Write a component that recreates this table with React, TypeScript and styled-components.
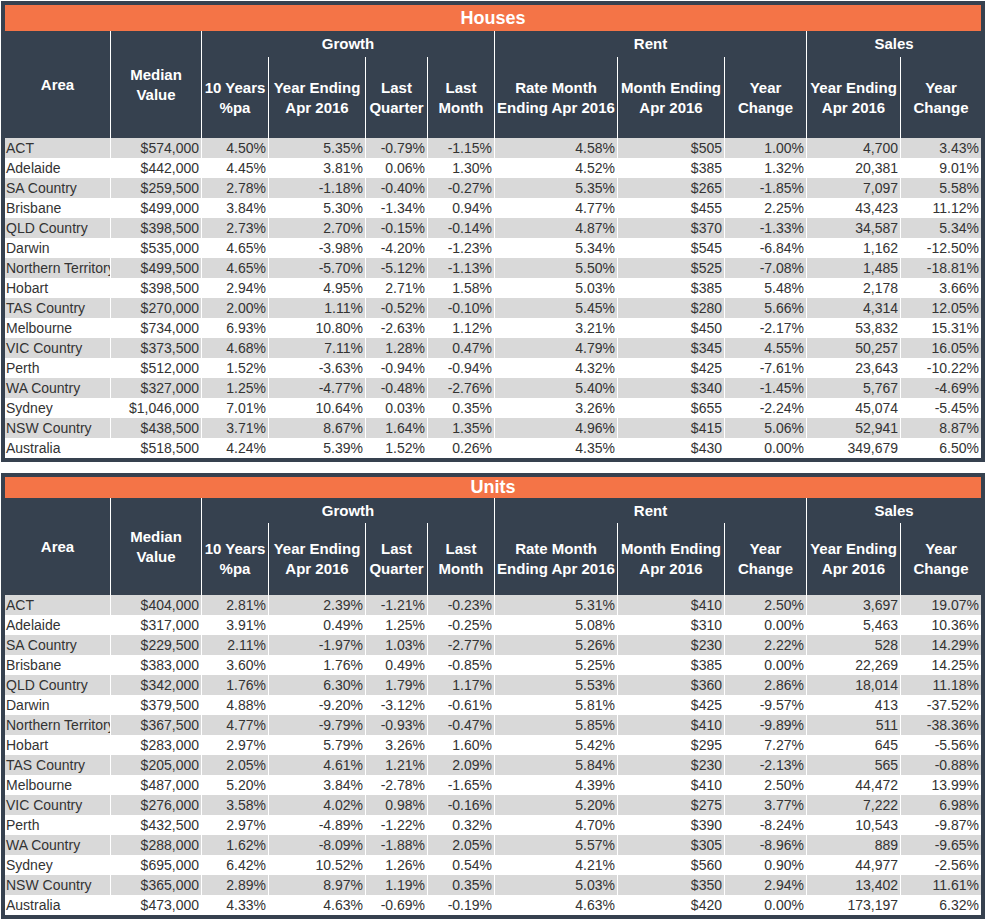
import React from "react";
import styled, { createGlobalStyle } from "styled-components";

const GlobalStyle = createGlobalStyle`
  html, body { margin: 0; padding: 0; background: #ffffff; }
  body { font-family: "Liberation Sans", Arial, sans-serif; }
`;

const DARK = "#36414f";
const ORANGE = "#f47447";
const STRIPE = "#d9d9d9";

const Page = styled.div`
  display: flex;
  flex-direction: column;
  gap: 11px;
  padding: 1px 0 0 1px;
  width: 984px;
`;

const Panel = styled.section`
  border: 4px solid ${DARK};
  background: ${DARK};
  display: flex;
  flex-direction: column;
`;

const TitleBar = styled.div<{ $h: number }>`
  height: ${(p) => p.$h}px;
  background: ${ORANGE};
  color: #ffffff;
  font-weight: 700;
  font-size: 18px;
  display: flex;
  align-items: center;
  justify-content: center;
`;

const Grid = styled.div<{ $top: number; $sub: number }>`
  display: grid;
  grid-template-columns: 105px 90px 66px 96px 61px 66px 122px 106px 81px 93px 80px;
  grid-template-rows: ${(p) => p.$top}px ${(p) => p.$sub}px;
  grid-auto-rows: 20px;
  column-gap: 1px;
  background: #ffffff;
`;

const HeadCell = styled.div<{ $col: string; $row: string }>`
  grid-column: ${(p) => p.$col};
  grid-row: ${(p) => p.$row};
  background: ${DARK};
  color: #ffffff;
  font-weight: 700;
  font-size: 15px;
  line-height: 20px;
  text-align: center;
  display: flex;
  align-items: center;
  justify-content: center;
  white-space: nowrap;
`;

const Cell = styled.div<{ $stripe: boolean; $left?: boolean }>`
  background: ${(p) => (p.$stripe ? STRIPE : "#ffffff")};
  color: #333333;
  font-size: 14px;
  line-height: 20px;
  height: 20px;
  white-space: nowrap;
  overflow: hidden;
  text-align: ${(p) => (p.$left ? "left" : "right")};
  padding: ${(p) => (p.$left ? "0 0 0 1px" : "0 2px 0 0")};
`;

type Row = string[];

const houses: Row[] = [
  ["ACT", "$574,000", "4.50%", "5.35%", "-0.79%", "-1.15%", "4.58%", "$505", "1.00%", "4,700", "3.43%"],
  ["Adelaide", "$442,000", "4.45%", "3.81%", "0.06%", "1.30%", "4.52%", "$385", "1.32%", "20,381", "9.01%"],
  ["SA Country", "$259,500", "2.78%", "-1.18%", "-0.40%", "-0.27%", "5.35%", "$265", "-1.85%", "7,097", "5.58%"],
  ["Brisbane", "$499,000", "3.84%", "5.30%", "-1.34%", "0.94%", "4.77%", "$455", "2.25%", "43,423", "11.12%"],
  ["QLD Country", "$398,500", "2.73%", "2.70%", "-0.15%", "-0.14%", "4.87%", "$370", "-1.33%", "34,587", "5.34%"],
  ["Darwin", "$535,000", "4.65%", "-3.98%", "-4.20%", "-1.23%", "5.34%", "$545", "-6.84%", "1,162", "-12.50%"],
  ["Northern Territory", "$499,500", "4.65%", "-5.70%", "-5.12%", "-1.13%", "5.50%", "$525", "-7.08%", "1,485", "-18.81%"],
  ["Hobart", "$398,500", "2.94%", "4.95%", "2.71%", "1.58%", "5.03%", "$385", "5.48%", "2,178", "3.66%"],
  ["TAS Country", "$270,000", "2.00%", "1.11%", "-0.52%", "-0.10%", "5.45%", "$280", "5.66%", "4,314", "12.05%"],
  ["Melbourne", "$734,000", "6.93%", "10.80%", "-2.63%", "1.12%", "3.21%", "$450", "-2.17%", "53,832", "15.31%"],
  ["VIC Country", "$373,500", "4.68%", "7.11%", "1.28%", "0.47%", "4.79%", "$345", "4.55%", "50,257", "16.05%"],
  ["Perth", "$512,000", "1.52%", "-3.63%", "-0.94%", "-0.94%", "4.32%", "$425", "-7.61%", "23,643", "-10.22%"],
  ["WA Country", "$327,000", "1.25%", "-4.77%", "-0.48%", "-2.76%", "5.40%", "$340", "-1.45%", "5,767", "-4.69%"],
  ["Sydney", "$1,046,000", "7.01%", "10.64%", "0.03%", "0.35%", "3.26%", "$655", "-2.24%", "45,074", "-5.45%"],
  ["NSW Country", "$438,500", "3.71%", "8.67%", "1.64%", "1.35%", "4.96%", "$415", "5.06%", "52,941", "8.87%"],
  ["Australia", "$518,500", "4.24%", "5.39%", "1.52%", "0.26%", "4.35%", "$430", "0.00%", "349,679", "6.50%"],
];

const units: Row[] = [
  ["ACT", "$404,000", "2.81%", "2.39%", "-1.21%", "-0.23%", "5.31%", "$410", "2.50%", "3,697", "19.07%"],
  ["Adelaide", "$317,000", "3.91%", "0.49%", "1.25%", "-0.25%", "5.08%", "$310", "0.00%", "5,463", "10.36%"],
  ["SA Country", "$229,500", "2.11%", "-1.97%", "1.03%", "-2.77%", "5.26%", "$230", "2.22%", "528", "14.29%"],
  ["Brisbane", "$383,000", "3.60%", "1.76%", "0.49%", "-0.85%", "5.25%", "$385", "0.00%", "22,269", "14.25%"],
  ["QLD Country", "$342,000", "1.76%", "6.30%", "1.79%", "1.17%", "5.53%", "$360", "2.86%", "18,014", "11.18%"],
  ["Darwin", "$379,500", "4.88%", "-9.20%", "-3.12%", "-0.61%", "5.81%", "$425", "-9.57%", "413", "-37.52%"],
  ["Northern Territory", "$367,500", "4.77%", "-9.79%", "-0.93%", "-0.47%", "5.85%", "$410", "-9.89%", "511", "-38.36%"],
  ["Hobart", "$283,000", "2.97%", "5.79%", "3.26%", "1.60%", "5.42%", "$295", "7.27%", "645", "-5.56%"],
  ["TAS Country", "$205,000", "2.05%", "4.61%", "1.21%", "2.09%", "5.84%", "$230", "-2.13%", "565", "-0.88%"],
  ["Melbourne", "$487,000", "5.20%", "3.84%", "-2.78%", "-1.65%", "4.39%", "$410", "2.50%", "44,472", "13.99%"],
  ["VIC Country", "$276,000", "3.58%", "4.02%", "0.98%", "-0.16%", "5.20%", "$275", "3.77%", "7,222", "6.98%"],
  ["Perth", "$432,500", "2.97%", "-4.89%", "-1.22%", "0.32%", "4.70%", "$390", "-8.24%", "10,543", "-9.87%"],
  ["WA Country", "$288,000", "1.62%", "-8.09%", "-1.88%", "2.05%", "5.57%", "$305", "-8.96%", "889", "-9.65%"],
  ["Sydney", "$695,000", "6.42%", "10.52%", "1.26%", "0.54%", "4.21%", "$560", "0.90%", "44,977", "-2.56%"],
  ["NSW Country", "$365,000", "2.89%", "8.97%", "1.19%", "0.35%", "5.03%", "$350", "2.94%", "13,402", "11.61%"],
  ["Australia", "$473,000", "4.33%", "4.63%", "-0.69%", "-0.19%", "4.63%", "$420", "0.00%", "173,197", "6.32%"],
];

const subHeads: [string, string][] = [
  ["10 Years", "%pa"],
  ["Year Ending", "Apr 2016"],
  ["Last", "Quarter"],
  ["Last", "Month"],
  ["Rate Month", "Ending Apr 2016"],
  ["Month Ending", "Apr 2016"],
  ["Year", "Change"],
  ["Year Ending", "Apr 2016"],
  ["Year", "Change"],
];

interface TableProps {
  title: string;
  titleH: number;
  topH: number;
  subH: number;
  rows: Row[];
}

const DataTable: React.FC<TableProps> = ({ title, titleH, topH, subH, rows }) => (
  <Panel>
    <TitleBar $h={titleH}>{title}</TitleBar>
    <Grid $top={topH} $sub={subH}>
      <HeadCell $col="1" $row="1 / span 2">Area</HeadCell>
      <HeadCell $col="2" $row="1 / span 2">
        Median
        <br />
        Value
      </HeadCell>
      <HeadCell $col="3 / span 4" $row="1">Growth</HeadCell>
      <HeadCell $col="7 / span 3" $row="1">Rent</HeadCell>
      <HeadCell $col="10 / span 2" $row="1">Sales</HeadCell>
      {subHeads.map(([a, b], i) => (
        <HeadCell key={i} $col={String(i + 3)} $row="2">
          {a}
          <br />
          {b}
        </HeadCell>
      ))}
      {rows.map((r, ri) =>
        r.map((v, ci) => (
          <Cell key={`${ri}-${ci}`} $stripe={ri % 2 === 0} $left={ci === 0}>
            {v}
          </Cell>
        ))
      )}
    </Grid>
  </Panel>
);

export default function App() {
  return (
    <>
      <GlobalStyle />
      <Page>
        <DataTable title="Houses" titleH={26} topH={26} subH={81} rows={houses} />
        <DataTable title="Units" titleH={21} topH={25} subH={72} rows={units} />
      </Page>
    </>
  );
}
